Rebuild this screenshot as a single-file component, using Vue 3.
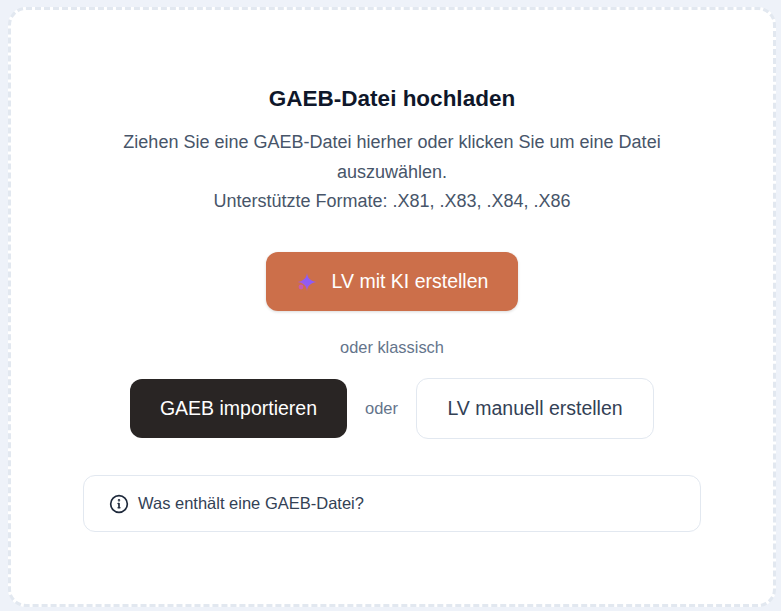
<template>
  <main class="page">
    <section class="card">
      <h2 class="title">GAEB-Datei hochladen</h2>
      <p class="desc">
        Ziehen Sie eine GAEB-Datei hierher oder klicken Sie um eine Datei auszuwählen.<br />
        Unterstützte Formate: .X81, .X83, .X84, .X86
      </p>
      <button class="btn btn-ai">
        <svg class="spark" viewBox="0 0 24 24" width="24" height="24" aria-hidden="true">
          <defs>
            <linearGradient id="sparkGrad" x1="0" y1="1" x2="1" y2="0">
              <stop offset="0" stop-color="#d9569f" />
              <stop offset="0.45" stop-color="#8f5cf6" />
              <stop offset="1" stop-color="#8b5cf6" />
            </linearGradient>
          </defs>
          <path fill="url(#sparkGrad)" d="M11 3c.7 5 2.500 7.600 9.500 9-7 1.400-8.800 4-9.500 9-.7-5-2.500-7.600-9.500-9 7-1.400 8.800-4 9.500-9z" />
          <circle cx="5" cy="17" r="2.400" fill="#c85bb0" />
        </svg>
        <span>LV mit KI erstellen</span>
      </button>
      <div class="classic">oder klassisch</div>
      <div class="actions">
        <button class="btn btn-dark">GAEB importieren</button>
        <span class="or">oder</span>
        <button class="btn btn-light">LV manuell erstellen</button>
      </div>
      <div class="info">
        <svg viewBox="0 0 24 24" width="20" height="20" fill="none" stroke="#1e293b" stroke-width="2" stroke-linecap="round" stroke-linejoin="round" aria-hidden="true">
          <circle cx="12" cy="12" r="10" />
          <path d="M12 16v-4.500M11 11.500h1M11 16.500h2" />
          <circle cx="12" cy="7.500" r="0.500" />
        </svg>
        <span>Was enthält eine GAEB-Datei?</span>
      </div>
    </section>
  </main>
</template>

<script setup>
</script>

<style>
html, body { margin: 0; background: #eef2f9; }
</style>

<style scoped>
.page {
  box-sizing: border-box;
  height: 611px;
  padding: 7px 5px 4px 8px;
  font-family: "Liberation Sans", Arial, sans-serif;
}
.card {
  box-sizing: border-box;
  height: 600px;
  padding: 72px 72px 0;
  background: #fff;
  border: 3px dashed #e2e8f0;
  border-radius: 18px;
  display: flex;
  flex-direction: column;
  align-items: center;
}
.title {
  margin: 0;
  font-size: 22.500px;
  line-height: 33px;
  font-weight: 700;
  color: #0f172a;
}
.desc {
  margin: 13px 0 0;
  max-width: 576px;
  font-size: 18px;
  line-height: 29.700px;
  text-align: center;
  color: #475569;
}
.btn {
  box-sizing: border-box;
  font-family: inherit;
  font-size: 19.500px;
  border-radius: 12px;
  display: flex;
  align-items: center;
  justify-content: center;
}
.btn-ai {
  margin-top: 35px;
  width: 252px;
  height: 59px;
  gap: 12px;
  border: 0;
  background: #cc6f4a;
  color: #fff;
  box-shadow: 0 1px 3px rgba(0, 0, 0, 0.15);
}
.spark { flex: none; }
.classic {
  margin-top: 27px;
  font-size: 16.400px;
  line-height: 18px;
  color: #64748b;
}
.actions {
  margin-top: 22px;
  display: flex;
  align-items: center;
  gap: 18px;
}
.btn-dark {
  width: 217px;
  height: 59px;
  border: 0;
  background: #292524;
  color: #fff;
}
.or {
  font-size: 16.500px;
  color: #64748b;
}
.btn-light {
  width: 238px;
  height: 61px;
  background: #fff;
  border: 1px solid #e2e8f0;
  color: #334155;
}
.info {
  box-sizing: border-box;
  margin-top: 36px;
  width: 618px;
  height: 57px;
  padding: 0 25px;
  display: flex;
  align-items: center;
  gap: 9px;
  border: 1px solid #e2e8f0;
  border-radius: 12px;
  font-size: 16.500px;
  color: #334155;
}
</style>
